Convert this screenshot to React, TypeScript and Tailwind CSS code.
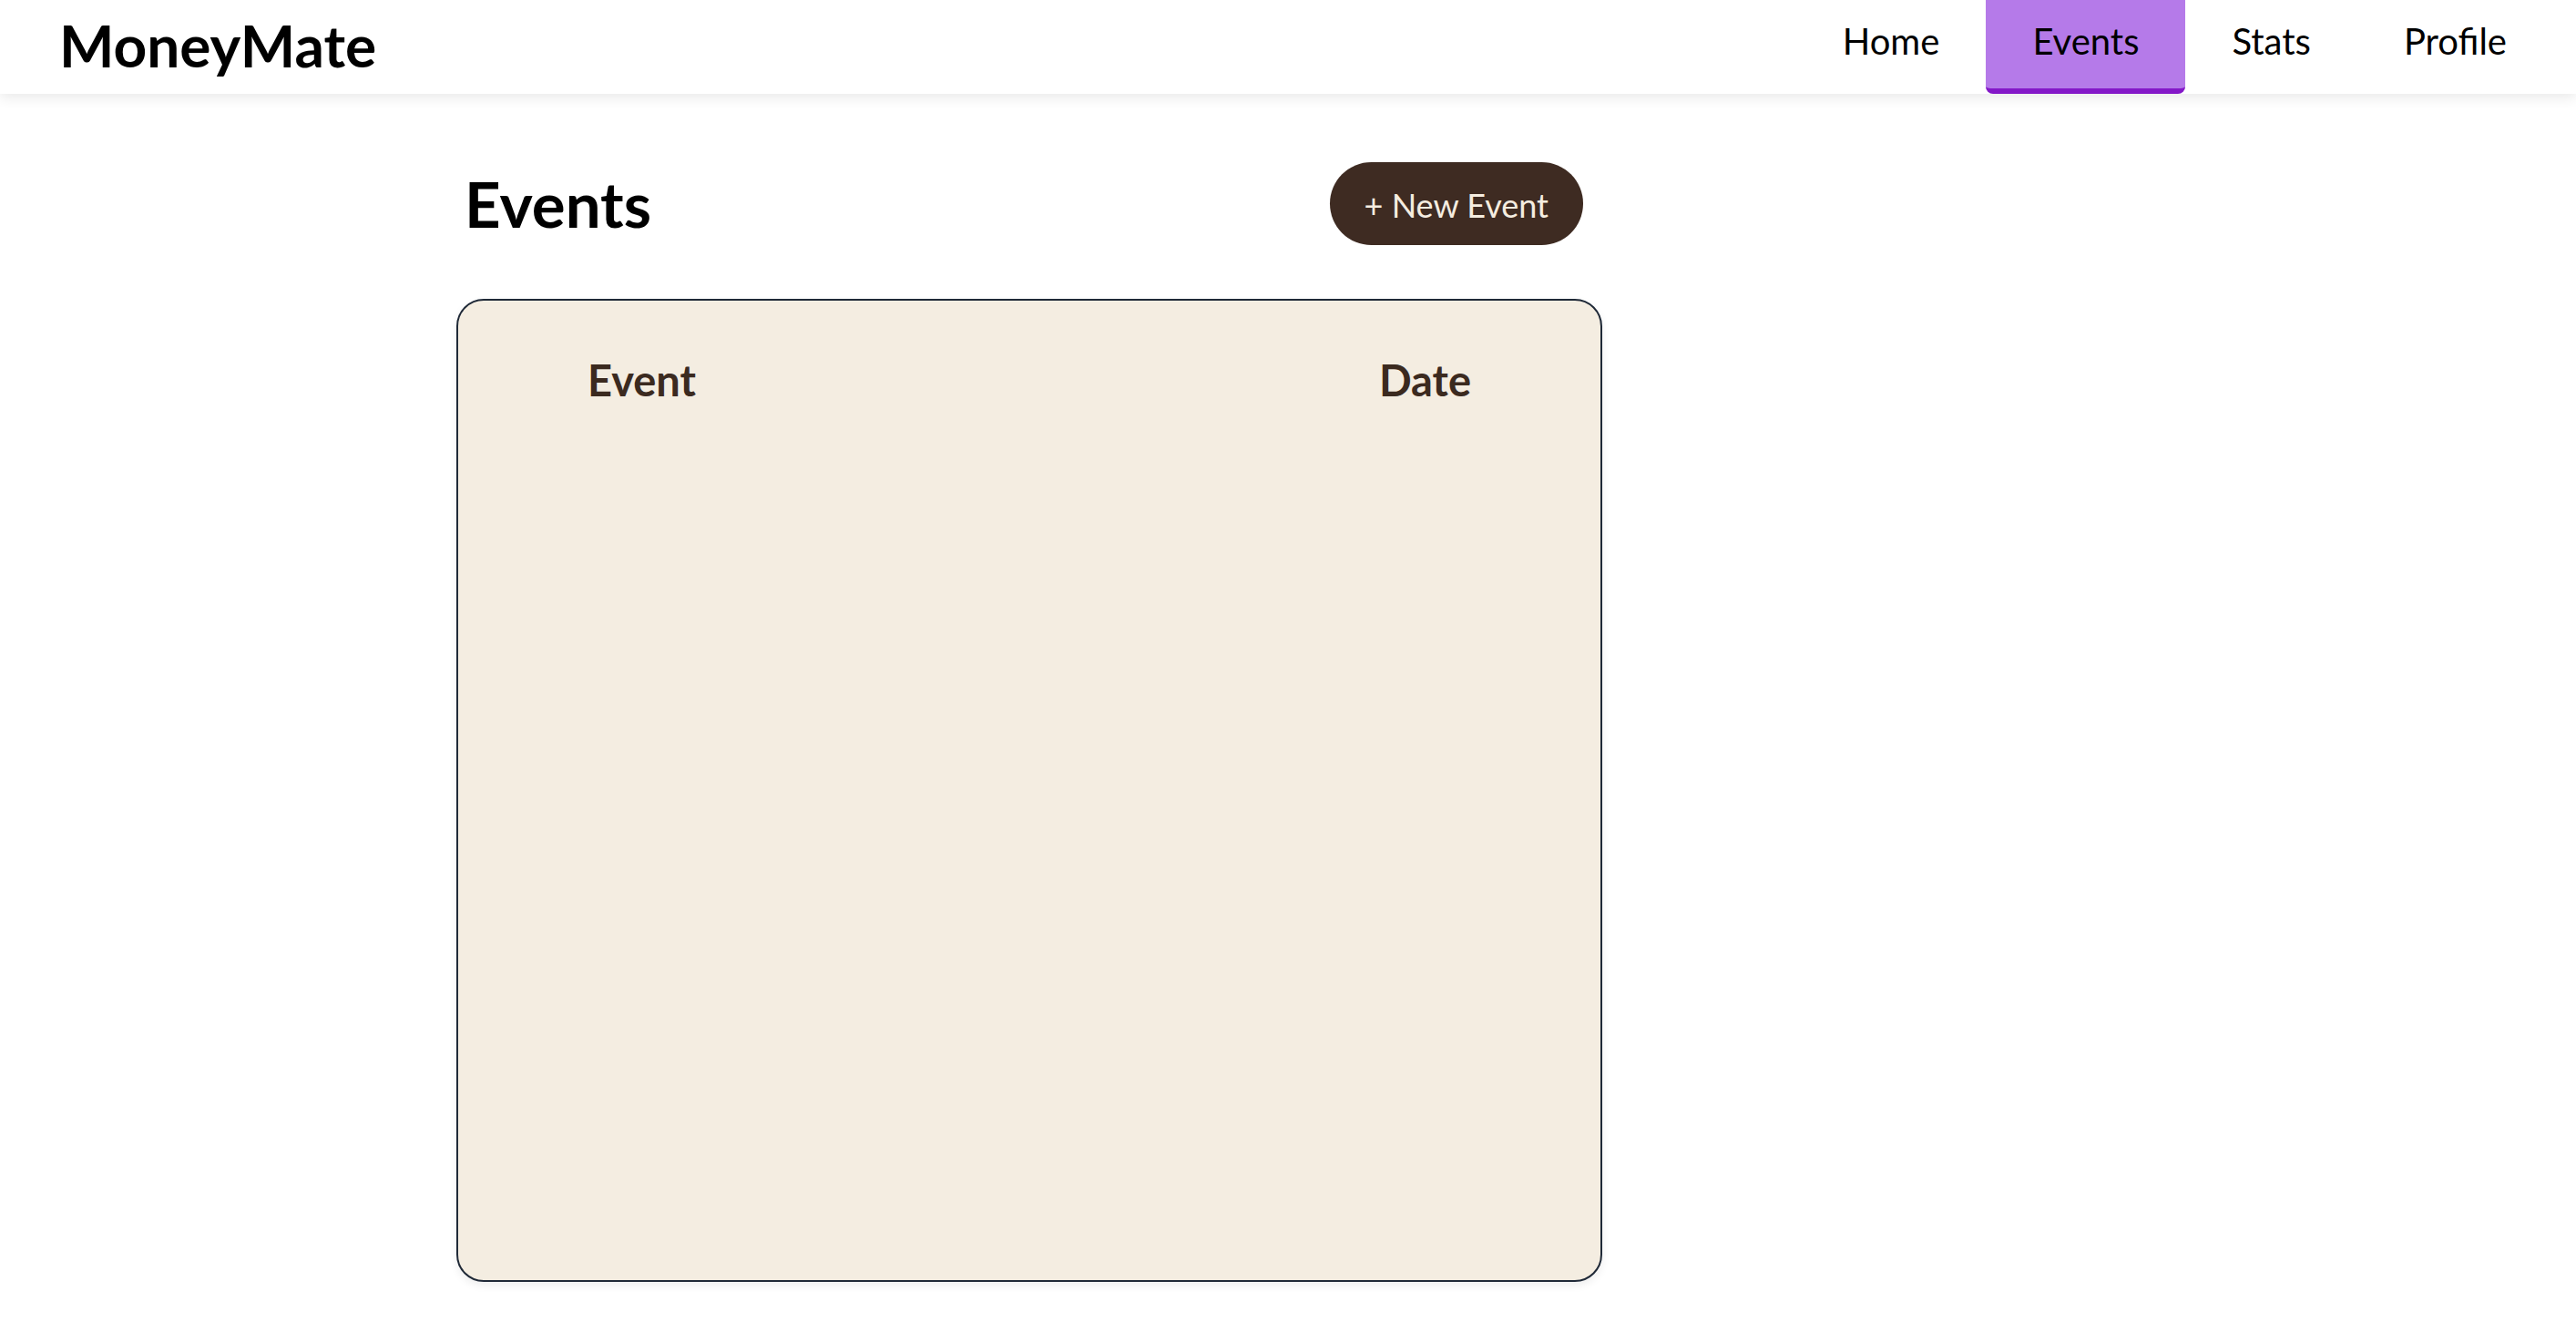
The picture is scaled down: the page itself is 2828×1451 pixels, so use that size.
import { useState } from 'react';

const NAV_ITEMS = ['Home', 'Events', 'Stats', 'Profile'];

interface EventRow {
  id: string;
  name: string;
  date: string;
}

const Header = ({ active }: { active: string }) => {
  return (
    <header className="relative z-10 flex h-[103px] items-start justify-between bg-white pl-[65px] pr-[25px] shadow-[0_4px_14px_rgba(0,0,0,0.09)]">
      <div className="mt-[11px] text-[64px] font-bold leading-[77px] text-black">MoneyMate</div>
      <nav className="flex h-full">
        {NAV_ITEMS.map((item) => (
          <a
            key={item}
            href="#"
            className={
              item === active
                ? 'flex h-[103px] items-start rounded-b-[8px] border-b-[6px] border-[#8418c8] bg-[#b57ae9] px-[51px] pt-[21px] text-[40px] leading-[48px] text-black'
                : 'flex h-[103px] items-start px-[51px] pt-[21px] text-[40px] leading-[48px] text-black'
            }
          >
            {item}
          </a>
        ))}
      </nav>
    </header>
  );
};

const EventsTable = ({ events }: { events: EventRow[] }) => {
  return (
    <div className="h-[1079px] w-[1258px] rounded-[30px] border-2 border-[#1f2937] bg-[#f4ede1] px-[142px] pt-[59px] shadow-[0_4px_10px_rgba(0,0,0,0.07)]">
      <div className="flex justify-between text-[47px] font-bold leading-[56px] text-[#3b2a1f]">
        <span>Event</span>
        <span>Date</span>
      </div>
      {events.map((ev) => (
        <div key={ev.id} className="flex justify-between text-[36px] text-[#3b2a1f]">
          <span>{ev.name}</span>
          <span>{ev.date}</span>
        </div>
      ))}
    </div>
  );
};

const App = () => {
  const [events] = useState<EventRow[]>([]);

  return (
    <div className="min-h-screen bg-white font-['Lato',sans-serif]">
      <Header active="Events" />
      <main className="pl-[501px] pt-[75px]">
        <div className="w-[1258px]">
          <div className="flex items-center justify-between pl-[9px] pr-[21px]">
            <h1 className="text-[69px] font-bold leading-[83px] text-black">Events</h1>
            <button
              type="button"
              className="h-[91px] rounded-full bg-[#3e2b22] px-[38px] pt-[3px] text-[36px] leading-[43px] text-[#f5ede0]"
            >
              + New Event
            </button>
          </div>
          <div className="mt-[59px]">
            <EventsTable events={events} />
          </div>
        </div>
      </main>
    </div>
  );
};

export default App;
